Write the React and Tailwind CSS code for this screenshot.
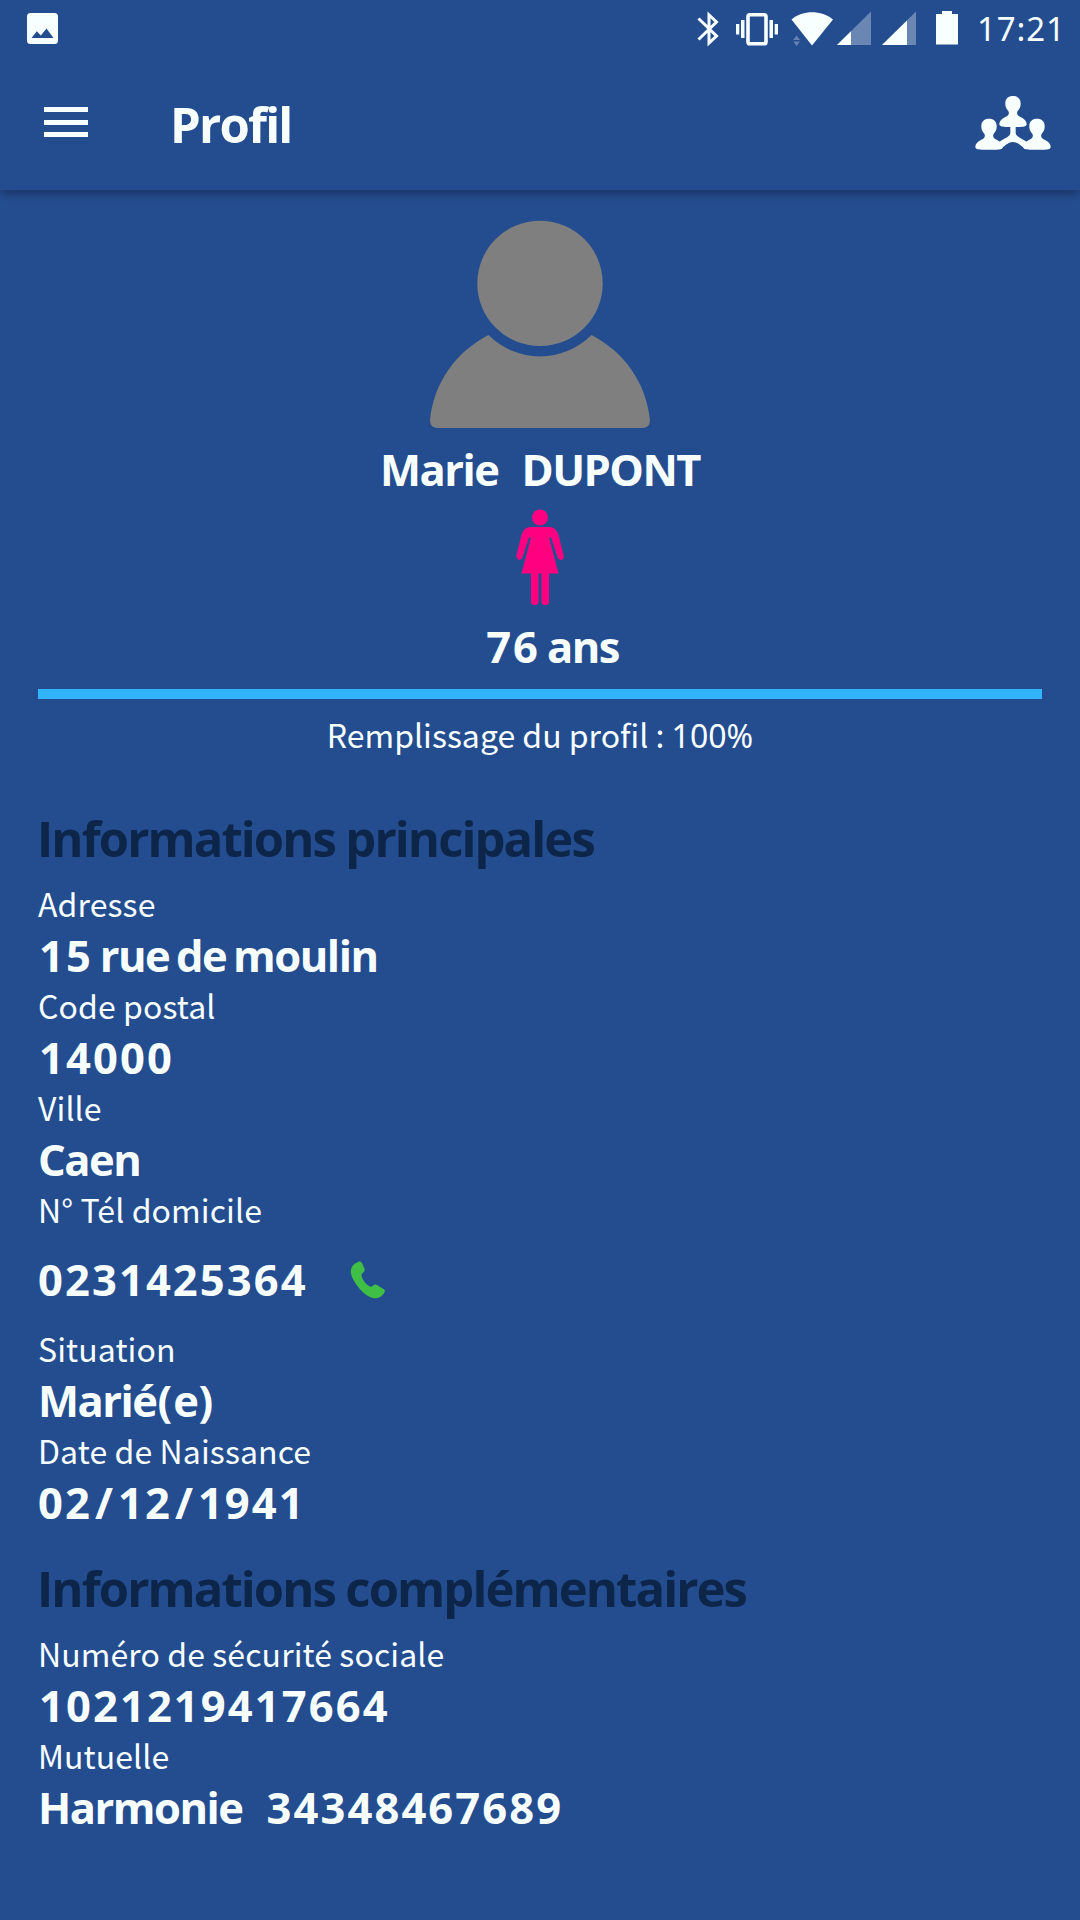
const MAIN_INFO = [
  { label: 'Adresse', value: '15 rue de moulin' },
  { label: 'Code postal', value: '14000' },
  { label: 'Ville', value: 'Caen' },
  { label: 'N° Tél domicile', value: '0231425364', phone: true },
  { label: 'Situation', value: 'Marié(e)' },
  { label: 'Date de Naissance', value: '02/12/1941' },
]

const EXTRA_INFO = [
  { label: 'Numéro de sécurité sociale', value: '1021219417664' },
  { label: 'Mutuelle', value: 'Harmonie', extra: '34348467689' },
]

// digits are spaced wider than letters, slashes and brackets get some air
function Mixed({ children }) {
  return children.split(/(\d+|[/()])/).filter(Boolean).map((part, i) => {
    if (part === '/') return <span key={i} className="mx-[3px] tracking-[2px]">/</span>
    if (/[()]/.test(part)) return <span key={i} className="mx-px tracking-normal">{part}</span>
    if (/\d/.test(part)) return <span key={i} className="tracking-[2.1px]">{part}</span>
    return <span key={i}>{part}</span>
  })
}

function Value({ children, className = '' }) {
  return (
    <p className={`h-14 font-['Open_Sans',sans-serif] text-[43.5px] leading-[60px] font-bold tracking-[-1.5px] [word-spacing:-3px] whitespace-nowrap ${className}`}>
      <Mixed>{children}</Mixed>
    </p>
  )
}

function Field({ label, value, extra, phone }) {
  const indent = value.startsWith('1') ? 'pl-px' : ''
  return (
    <div>
      <p className="h-[46px] text-[32px] leading-[46px] tracking-[0.1px]">{label}</p>
      {phone ? (
        <div className="flex h-[93px] items-center pb-0.5">
          <Value className="w-[270px]">{value}</Value>
          <PhoneIcon />
        </div>
      ) : (
        <div className="flex gap-6">
          <Value className={indent}>{value}</Value>
          {extra && <Value>{extra}</Value>}
        </div>
      )}
    </div>
  )
}

function Section({ title, fields, className }) {
  return (
    <section className={className}>
      <h2 className="mb-[15px] -ml-px h-[60px] font-['Open_Sans',sans-serif] text-[49px] leading-[67px] font-bold tracking-[-1.9px] [word-spacing:-0.5px] text-[#0c2549]">{title}</h2>
      {fields.map(f => <Field key={f.label} {...f} />)}
    </section>
  )
}

function PhoneIcon() {
  return (
    <svg className="mt-1 ml-[42px] h-[38px] w-9" viewBox="0 0 108 114" fill="#3fbf45">
      <path d="M24 3C29 0 34 2 37 8L43 22C46 29 43 33 37 37C33 40 34 46 38 54C43 64 50 71 57 75C62 78 66 77 69 74C73 70 77 70 82 73L99 83C106 87 106 91 102 97C95 107 85 113 74 112C58 111 38 96 23 76C9 57 0 39 3 26C5 15 13 7 24 3Z" />
    </svg>
  )
}

function StatusBar() {
  return (
    <div className="flex h-[60px] items-start pt-[11px] pl-[27px]">
      <svg className="mt-0.5 h-[31px] w-[31px]" viewBox="0 0 31 31" fill="currentColor">
        <path fillRule="evenodd" d="M3.5 0H27.5Q31 0 31 3.5V27.5Q31 31 27.5 31H3.5Q0 31 0 27.5V3.5Q0 0 3.5 0ZM4.5 25H26.5L19.5 15.5L13.8 22.5L9.8 18.2Z" />
      </svg>
      <svg className="ml-[639px] h-9 w-[22px]" viewBox="0 0 22 36" fill="none" stroke="currentColor" strokeWidth="3">
        <path d="M1.5 7.5L19.5 25L12 32V4L19.5 11L1.5 28.5" />
      </svg>
      <svg className="ml-[17px] h-9 w-[42px]" viewBox="0 0 42 36" fill="currentColor">
        <path d="M0 13H3.3V23.5H0ZM5 9H8.5V27H5ZM33.5 9H37V27H33.5ZM38.7 13H42V23.5H38.7Z" />
        <rect x="12" y="3.7" width="18" height="29" rx="1.8" fill="none" stroke="currentColor" strokeWidth="3.6" />
      </svg>
      <svg className="ml-[13px] h-9 w-[42px]" viewBox="0 0 42 36" fill="currentColor">
        <path d="M0.5 8.5C12 -1.2 30 -1.2 42 8.5L21 34.5Z" />
        <path d="M2.2 29L5.5 24.5L9 29ZM2.2 30.5L5.5 35L9 30.5Z" opacity=".3" />
      </svg>
      <svg className="ml-1 h-9 w-[34px]" viewBox="0 0 34 36" fill="currentColor">
        <path d="M34 0.5V34H0Z" opacity=".33" />
        <path d="M14 20.2V34H0Z" />
      </svg>
      <svg className="ml-[11px] h-9 w-[34px]" viewBox="0 0 34 36" fill="currentColor">
        <path d="M34 0.5V34H0Z" opacity=".33" />
        <path d="M25 9.4V34H0Z" />
      </svg>
      <svg className="ml-5 h-9 w-[22px]" viewBox="0 0 22 36" fill="currentColor">
        <path d="M6 0H16V3H22V33.5H0V3H6Z" />
      </svg>
      <span className="ml-[19px] font-['Noto_Sans',sans-serif] text-[33px] leading-[36px] tracking-[0.9px]">17:21</span>
    </div>
  )
}

function TeamIcon() {
  return (
    <svg className="h-[75px] w-[100px]" viewBox="0 0 300 225" fill="currentColor">
      <defs>
        <path id="bust" d="M0 0C14 0 23 8 23 21C24 31 20 38 14 45C11 50 12 56 18 61C28 66 39 70 41 84C41 90 36 92 22 93H-22C-36 92 -41 90 -41 84C-39 70 -28 66 -18 61C-12 56 -11 50 -14 45C-20 38 -24 31 -23 21C-23 8 -14 0 0 0Z" />
      </defs>
      <use href="#bust" x="159" y="33" />
      <use href="#bust" x="87" y="101" />
      <use href="#bust" x="231" y="101" />
      <path d="M151 122H167V145C169 155 181 159 195 167L208 176L196 192C184 184 176 172 159 171C142 172 134 184 122 192L110 176L123 167C137 159 149 155 151 145Z" />
    </svg>
  )
}

function AppBar() {
  return (
    <div className="flex h-[130px] items-start pr-5">
      <button className="mt-[47px] ml-11 flex w-11 flex-col gap-[7.5px]">
        <span className="h-[5px] bg-current" />
        <span className="h-[5px] bg-current" />
        <span className="h-[5px] bg-current" />
      </button>
      <h1 className="mt-[31px] ml-[82px] font-['Open_Sans',sans-serif] text-[49px] leading-[66px] font-bold tracking-[-1.8px]">Profil</h1>
      <div className="mt-[25px] ml-auto">
        <TeamIcon />
      </div>
    </div>
  )
}

export default function App() {
  return (
    <div className="h-[1920px] w-[1080px] overflow-hidden bg-[#244d90] font-['Noto_Sans_CJK_SC','Noto_Sans',sans-serif] text-[#f8ffff]">
      <header className="relative bg-[#244d90] shadow-[0_4px_9px_rgba(0,0,0,0.3)]">
        <StatusBar />
        <AppBar />
      </header>

      <main className="px-[38px]">
        <div className="flex flex-col items-center pt-[30px]">
          <svg className="h-[209px] w-[222px]" viewBox="429 220 222 209" fill="#7f7f7f">
            <circle cx="540" cy="283.4" r="62.7" />
            <path d="M488.5 335A72.7 72.7 0 0 0 591.5 335C624 352 646 382 650 420Q650 428 642 428H438Q430 428 430 420C434 382 456 352 488.5 335Z" />
          </svg>
          <div className="mt-[11px] flex gap-[23px]">
            <Value>Marie</Value>
            <Value>DUPONT</Value>
          </div>
          <svg className="mt-[13px] h-[97px] w-12" viewBox="516 509 48 97" fill="#ff0080">
            <circle cx="540" cy="517.5" r="8" />
            <path d="M531 527H549C554 527 557 530 558.5 535L563.7 556C564 559 562.5 560 560.5 560Q558.5 560 557.5 557L551 537.5H549L558.5 573.5H549V602Q549 605 545.5 605Q541.5 605 541.5 602V573.5H538.5V602Q538.5 605 534.5 605Q531 605 531 602V573.5H521.5L531 537.5H529L522.5 557Q521.5 560 519.5 560Q517.5 560 516.3 556L521.5 535C523 530 526 527 531 527Z" />
          </svg>
          <Value className="mt-[11px] pl-[25px]">76 ans</Value>
          <div className="mt-4 h-2.5 w-full bg-[#32b5ff]" />
          <p className="mt-3 h-[46px] text-[32px] leading-[46px]">
            Remplissage du profil : <span className="font-['Noto_Sans',sans-serif] leading-none">100%</span>
          </p>
        </div>

        <Section title="Informations principales" fields={MAIN_INFO} className="mt-12" />
        <Section title="Informations complémentaires" fields={EXTRA_INFO} className="mt-[26px]" />
      </main>
    </div>
  )
}
